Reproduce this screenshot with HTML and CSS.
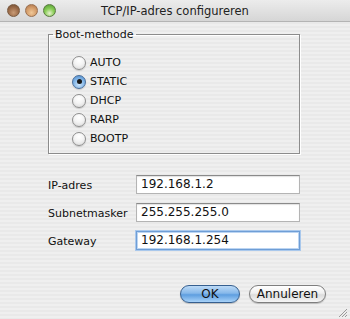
FILE: index.html
```html
<!DOCTYPE html>
<html>
<head>
  <meta charset="utf-8">
  <title>TCP/IP-adres configureren</title>
  <link rel="stylesheet" href="styles.css">
</head>
<body>
<div class="window">
  <!-- titelbalk -->
  <div class="titlebar">
    <div class="lights">
      <span class="light close"></span>
      <span class="light mini"></span>
      <span class="light zoom"></span>
    </div>
    <div class="title">TCP/IP-adres configureren</div>
    <div class="spacer"></div>
  </div>

  <div class="content">
    <fieldset class="group">
      <legend>Boot-methode</legend>
      <div class="radios">
        <div class="radio-row"><span class="radio"></span>AUTO</div>
        <div class="radio-row"><span class="radio checked"></span>STATIC</div>
        <div class="radio-row"><span class="radio"></span>DHCP</div>
        <div class="radio-row"><span class="radio"></span>RARP</div>
        <div class="radio-row"><span class="radio"></span>BOOTP</div>
      </div>
    </fieldset>

    <div class="fields">
      <div class="field-row"><span class="label">IP-adres</span><span class="input">192.168.1.2</span></div>
      <div class="field-row"><span class="label">Subnetmasker</span><span class="input">255.255.255.0</span></div>
      <div class="field-row"><span class="label">Gateway</span><span class="input focus">192.168.1.254</span></div>
    </div>

    <div class="buttons">
      <span class="btn default">OK</span>
      <span class="btn">Annuleren</span>
    </div>
  </div>
  <svg class="grip" width="9" height="9" viewBox="0 0 9 9"><path d="M1 9 L9 1 M4 9 L9 4 M7 9 L9 7" stroke="#9a9a9a" stroke-width="1"/></svg>
</div>
</body>
</html>
```

FILE: styles.css
```css
/* basis */
body {
  margin: 0;
  font-family: "DejaVu Sans", "Liberation Sans", sans-serif;
  font-size: 11px;
  color: #111;
}

.window {
  position: relative;
  width: 350px;
  height: 319px;
  background: repeating-linear-gradient(#efefef 0, #efefef 2px, #e9e9e9 2px, #e9e9e9 4px);
  overflow: hidden;
}

/* titelbalk */
.titlebar {
  height: 22px;
  display: flex;
  align-items: center;
  background: linear-gradient(#ececec, #d6d6d6);
  border-bottom: 1px solid #b4b4b4;
  box-sizing: border-box;
}

.lights {
  display: flex;
  gap: 5px;
  padding-left: 7px;
  width: 70px;
}

.spacer {
  width: 77px;
}

.light {
  width: 13px;
  height: 13px;
  border-radius: 50%;
  box-sizing: border-box;
  border: 1px solid #7a5a40;
}

.light.close {
  background: radial-gradient(circle at 50% 70%, #c99b75 0, #9a6a48 55%, #6e4a30 100%);
}

.light.mini {
  background: radial-gradient(circle at 50% 70%, #f0c898 0, #d29a68 55%, #a87048 100%);
  border-color: #9a7050;
}

.light.zoom {
  background: radial-gradient(circle at 50% 75%, #e8f0d0 0, #8ccf5a 45%, #4f9a2e 100%);
  border-color: #5a7a40;
}

.title {
  flex: 1;
  text-align: center;
  font-size: 11.5px;
  color: #222;
}

/* inhoud */
.content {
  padding: 6px 0 0 48px;
}

.group {
  width: 252px;
  height: 126px;
  margin: 0;
  padding: 0;
  border: 1px solid #8c8c8c;
  box-shadow: 1px 1px 0 #fff, inset 1px 1px 0 #fff;
  box-sizing: border-box;
}

.group legend {
  margin-left: 4px;
  padding: 0 2px;
  line-height: 13px;
}

.radios {
  display: flex;
  flex-direction: column;
  padding: 12px 0 0 23px;
}

.radio-row {
  display: flex;
  align-items: center;
  height: 19px;
  gap: 4px;
}

.radio {
  width: 14px;
  height: 14px;
  border-radius: 50%;
  box-sizing: border-box;
  border: 1px solid #8e8e8e;
  background: radial-gradient(circle at 50% 30%, #ffffff 0, #f4f4f4 45%, #d6d6d6 100%);
  box-shadow: 0 1px 1px rgba(0, 0, 0, 0.15);
  display: flex;
  align-items: center;
  justify-content: center;
}

.radio.checked {
  border-color: #4a6e9a;
  background: radial-gradient(circle at 50% 70%, #cfe6fb 0, #7fb3e6 55%, #4a86c6 100%);
}

.radio.checked::after {
  content: "";
  width: 5px;
  height: 5px;
  border-radius: 50%;
  background: #1a1a1a;
}

/* velden */
.fields {
  display: flex;
  flex-direction: column;
  gap: 9px;
  margin-top: 21px;
}

.field-row {
  display: flex;
  align-items: flex-end;
}

.label {
  width: 88px;
  line-height: 14px;
  padding-bottom: 1px;
}

.input {
  width: 164px;
  height: 19px;
  box-sizing: border-box;
  border: 1px solid #b4b4b4;
  border-top-color: #8a8a8a;
  background: #fff;
  box-shadow: inset 0 1px 1px rgba(0, 0, 0, 0.12);
  font-size: 12px;
  line-height: 17px;
  padding-left: 4px;
}

.input.focus {
  border-color: #6f9ed6;
  box-shadow: 0 0 0 1px #a9c8ec, inset 0 0 0 1px #bcd5f2;
}

/* knoppen */
.buttons {
  display: flex;
  justify-content: flex-end;
  gap: 9px;
  margin-top: 35px;
  padding-right: 24px;
}

.btn {
  height: 18px;
  box-sizing: border-box;
  border-radius: 9px;
  border: 1px solid #7e7e7e;
  background: linear-gradient(#ffffff, #f0f0f0 45%, #dcdcdc 55%, #f6f6f6);
  display: flex;
  align-items: center;
  justify-content: center;
  font-size: 12px;
  padding: 0 7px;
  width: 77px;
  box-shadow: 0 1px 1px rgba(0, 0, 0, 0.2);
}

.btn.default {
  width: 60px;
  border-color: #365f8f;
  background: linear-gradient(#bcdaf6, #86b8ea 45%, #5e9ee0 55%, #a8d2f8);
}

.grip {
  position: absolute;
  right: 3px;
  bottom: 2px;
}
```
